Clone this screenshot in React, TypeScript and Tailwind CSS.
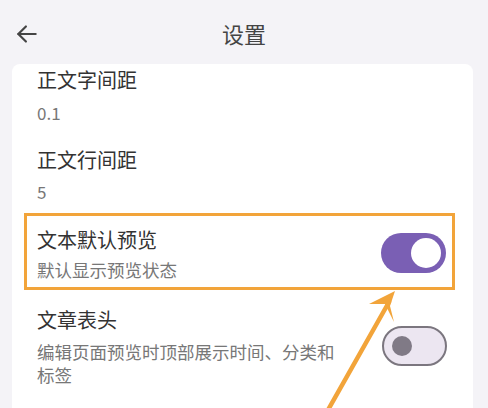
import React from 'react';

const font = { fontFamily: '"Noto Sans CJK SC", "Noto Sans", sans-serif' };

const Toggle = ({ on }: { on: boolean }) =>
  on ? (
    <div className="w-[65px] h-[40px] rounded-full bg-[#7a5fb4] flex items-center justify-end pr-[5px] shrink-0">
      <div className="w-[30px] h-[30px] rounded-full bg-white" />
    </div>
  ) : (
    <div className="w-[65px] h-[40px] rounded-full bg-[#ece6f1] border-2 border-[#7b767f] flex items-center pl-[8px] shrink-0">
      <div className="w-[20px] h-[20px] rounded-full bg-[#807a86]" />
    </div>
  );

export default function App() {
  return (
    <div className="relative w-[488px] h-[408px] bg-[#f4f3f7] overflow-hidden" style={font}>
      {/* Top bar */}
      <div className="h-[64px] flex items-center px-[14px] relative">
        <svg width="26" height="26" viewBox="0 0 24 24" fill="none" stroke="#444" strokeWidth="2" strokeLinecap="round" strokeLinejoin="round" className="mt-[4px]">
          <path d="M20 12H4" />
          <path d="M11 5l-7 7 7 7" />
        </svg>
        <div className="absolute left-0 right-0 top-0 h-[64px] flex items-center justify-center text-[22px] text-[#444] pointer-events-none pt-[2px]">
          设置
        </div>
      </div>

      {/* Card */}
      <div className="mx-[12px] w-[461px] bg-white rounded-t-[8px] h-[344px] pt-[2px]">
        <div className="pl-[25px] pr-[26px]">
          <div className="text-[20px] text-[#333] leading-[28px]">正文字间距</div>
          <div className="text-[17px] text-[#777] leading-[24px] mt-[7px]">0.1</div>
        </div>
        <div className="pl-[25px] pr-[26px] mt-[21px]">
          <div className="text-[20px] text-[#333] leading-[28px]">正文行间距</div>
          <div className="text-[17px] text-[#777] leading-[24px] mt-[6px]">5</div>
        </div>

        {/* Highlighted row */}
        <div className="ml-[12px] w-[431px] mt-[9px] h-[77px] border-[3px] border-[#f2a43a] flex pl-[10px] pr-[6px]">
          <div className="flex-1 pt-[10px]">
            <div className="text-[20px] text-[#333] leading-[28px]">文本默认预览</div>
            <div className="text-[17.5px] text-[#777] leading-[24px] mt-[4px]">默认显示预览状态</div>
          </div>
          <div className="self-center mt-[2px]">
            <Toggle on />
          </div>
        </div>

        <div className="pl-[25px] pr-[26px] mt-[16px] flex items-center">
          <div className="flex-1">
            <div className="text-[20px] text-[#333] leading-[28px]">文章表头</div>
            <div className="text-[17.5px] text-[#777] leading-[23px] mt-[6px] w-[310px]">
              编辑页面预览时顶部展示时间、分类和标签
            </div>
          </div>
          <div>
            <Toggle on={false} />
          </div>
        </div>
      </div>

      {/* Annotation arrow */}
      <svg className="absolute left-0 top-0 pointer-events-none" width="488" height="408" viewBox="0 0 488 408">
        <line x1="328" y1="410" x2="389" y2="302" stroke="#f2a43a" strokeWidth="4.5" strokeLinecap="round" />
        <polygon points="395,291 369,304 385,304 394,322 390,306" fill="#f2a43a" />
      </svg>
    </div>
  );
}
